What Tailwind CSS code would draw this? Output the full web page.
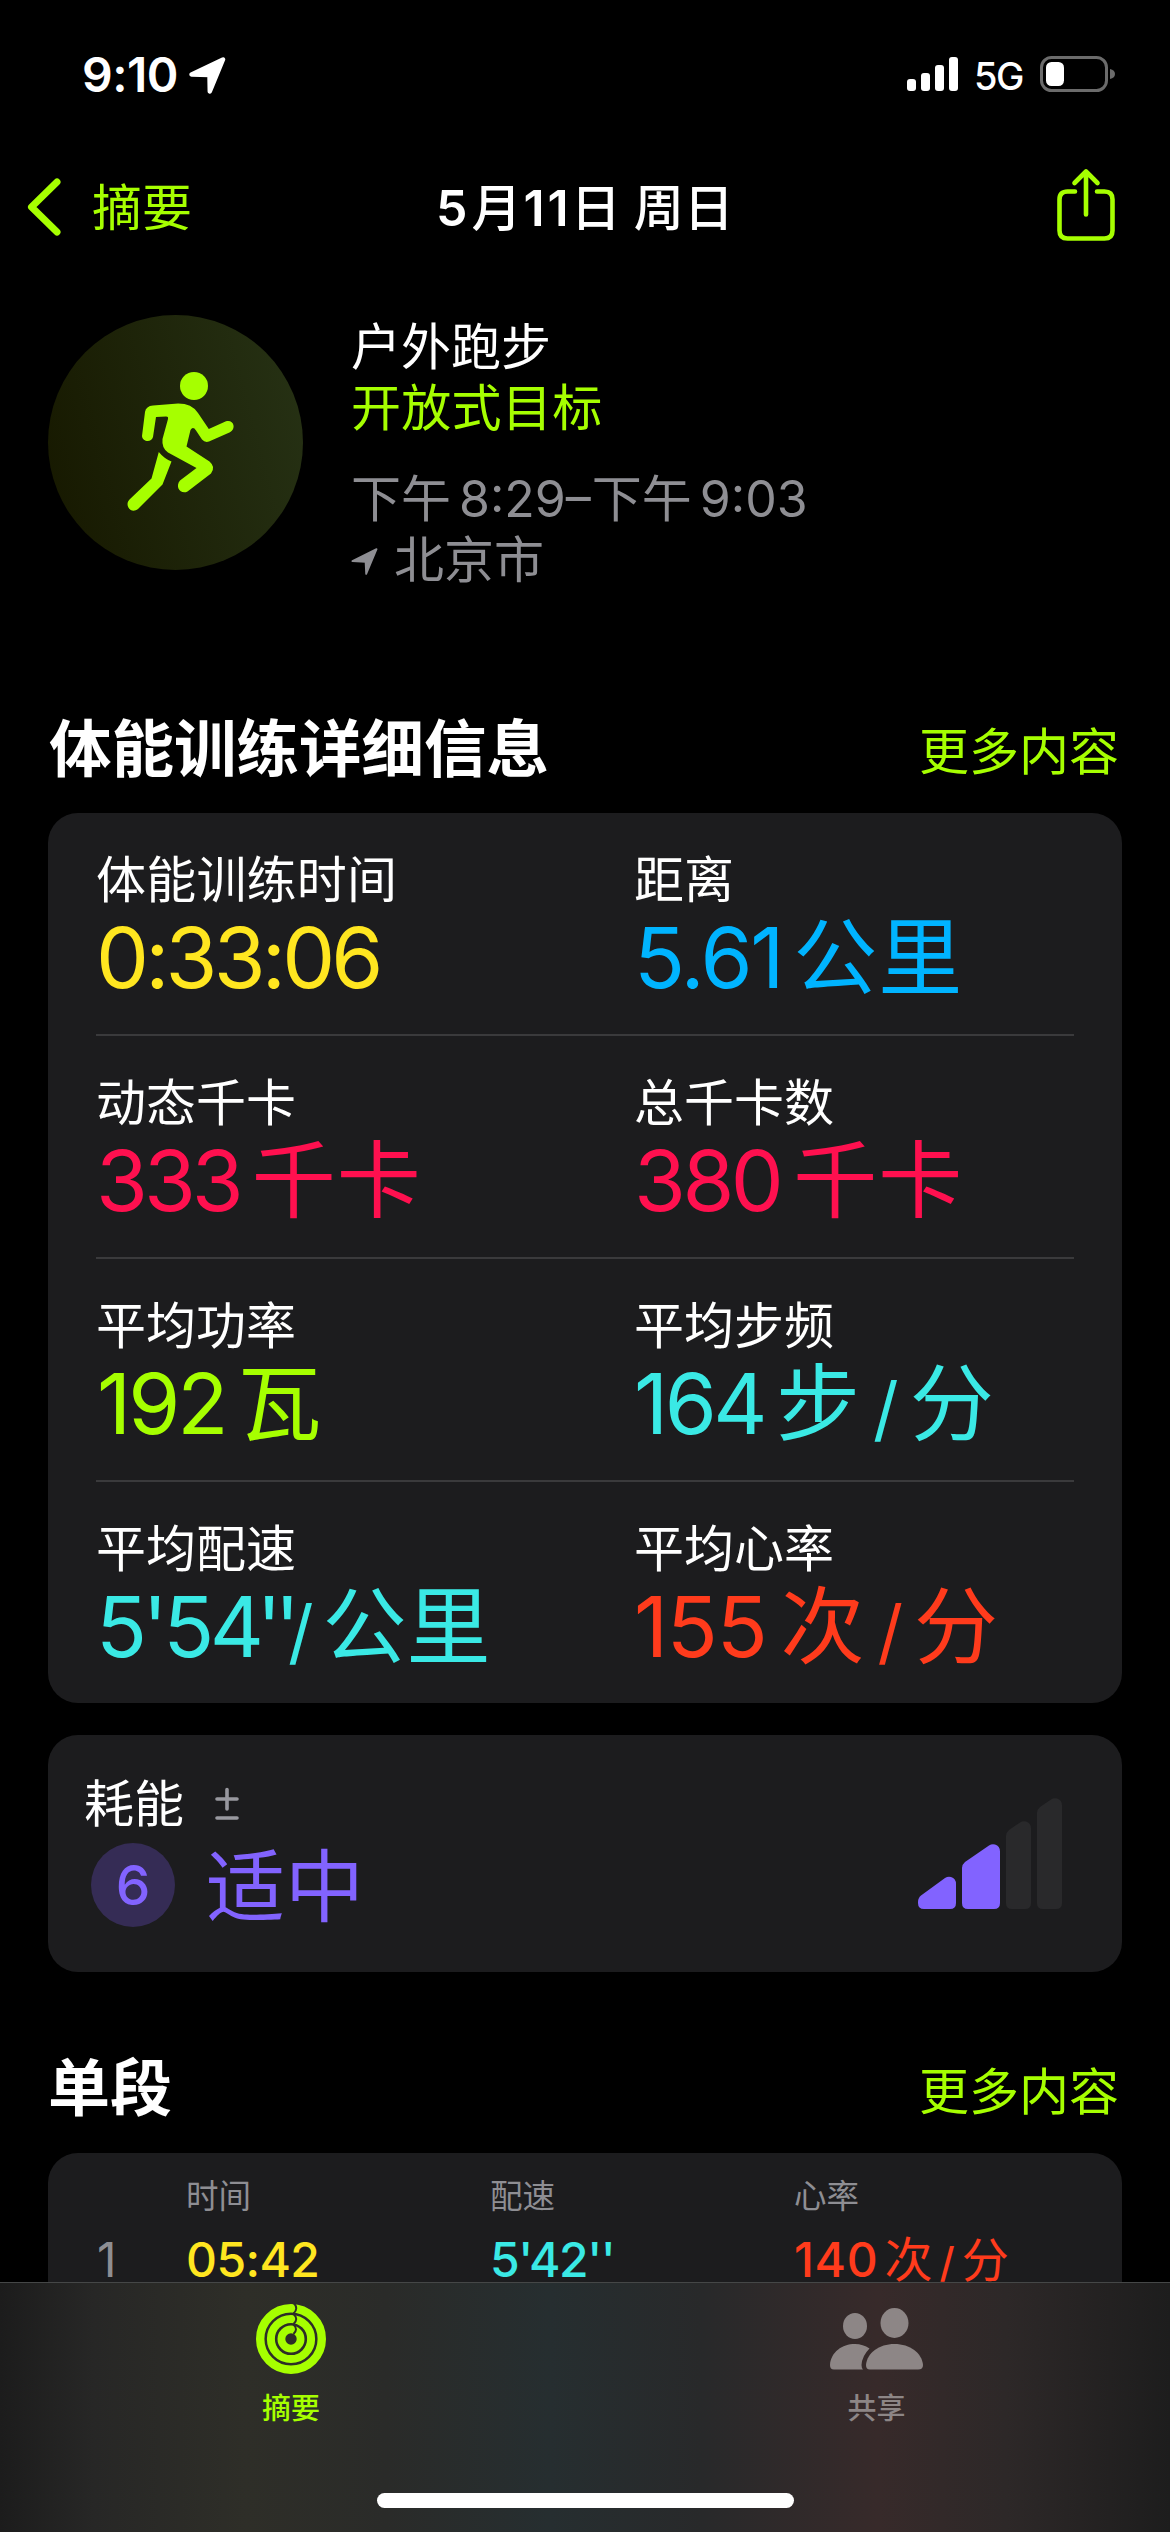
<!DOCTYPE html>
<html lang="zh-CN">
<head>
<meta charset="utf-8">
<title>体能训练</title>
<script src="https://cdn.jsdelivr.net/npm/@tailwindcss/browser@4"></script>
</head>
<body class="bg-black">
<div class="relative flex h-[2532px] w-[1170px] flex-col overflow-hidden bg-black font-['Inter','Noto_Sans_CJK_SC',sans-serif] whitespace-nowrap text-white">

  <!-- status bar -->
  <header class="flex h-[150px] shrink-0 items-center pr-[55px] pl-[82px]">
    <span class="text-[48px] leading-[60px] font-semibold tracking-[-0.500px]">9:10</span>
    <svg class="ml-[11px] h-[37px] w-[37px]" viewBox="0 0 37 37" fill="#fff" stroke="#fff" stroke-width="4.500" stroke-linejoin="round"><path d="M2.500 17.500 L34 2.500 L20.800 34.500 L20.500 18Z"/></svg>
    <div class="mb-[2px] ml-auto flex items-center">
      <div class="flex h-[34px] items-end gap-[5px]">
        <i class="h-[12px] w-[9px] rounded-[3px] bg-white"></i><i class="h-[18px] w-[9px] rounded-[3px] bg-white"></i><i class="h-[26px] w-[9px] rounded-[3px] bg-white"></i><i class="h-[34px] w-[9px] rounded-[3px] bg-white"></i>
      </div>
      <span class="ml-[16px] w-[49px] pt-[3px] text-[38px] leading-[50px] font-medium tracking-[-1.500px]">5G</span>
      <svg class="ml-[17px] h-[36px] w-[75px]" viewBox="0 0 75 36"><rect x="1.500" y="1.500" width="65" height="33" rx="10" fill="none" stroke="#6b6b6b" stroke-width="3"/><path d="M70 13v10q5-1 5-5t-5-5Z" fill="#6b6b6b"/><rect x="6" y="6" width="18" height="24" rx="5.500" fill="#fff"/></svg>
    </div>
  </header>

  <!-- navigation bar -->
  <nav class="grid h-[115px] shrink-0 grid-cols-[410px_1fr_auto] items-center pr-[54px] pl-[26px] text-[50px] leading-[60px]">
    <div class="flex items-center text-[#a6ff00]">
      <svg class="h-[60px] w-[38px]" viewBox="0 0 38 60" fill="none" stroke="#a6ff00" stroke-width="7" stroke-linecap="round" stroke-linejoin="round"><path d="M31 4 5.500 29 31 54"/></svg>
      <span class="ml-[28px]">摘要</span>
    </div>
    <div class="flex items-baseline font-semibold">
      <span>5</span><span class="ml-[4px] font-medium">月</span><span class="ml-[2px] tracking-[3px]">11</span><span class="ml-[-1px] font-medium">日</span><span class="ml-[13px] font-medium">周日</span>
    </div>
    <svg class="mb-[5px] h-[74px] w-[60px]" viewBox="0 0 60 74" fill="none" stroke="#a6ff00" stroke-width="4.600" stroke-linecap="round" stroke-linejoin="round"><path d="M19 23.500H11.500Q3.500 23.500 3.500 31.500V62.500Q3.500 70.500 11.500 70.500H48.500Q56.500 70.500 56.500 62.500V31.500Q56.500 23.500 48.500 23.500H41M30 46.500V3.500M18.500 15 30 3.500 41.500 15"/></svg>
  </nav>

  <!-- workout summary -->
  <section class="flex h-[405px] shrink-0 gap-[48px] pt-[50px] pl-[48px]">
    <div class="flex size-[255px] items-center justify-center rounded-full bg-linear-[75deg,#171900_5%,#263114_95%]">
      <svg class="size-[255px]" viewBox="48 315 255 255" fill="#a6ff00">
        <circle cx="194" cy="386" r="14"/>
        <path d="M153 405.500 L175 403.700 Q191 402.500 198 413 L208.800 429 L226 421.300 C233 419 237 428 230 432.300 L209 441.500 Q205 443 202 439.500 L196 430.500 Q193 426 190.500 430 L186.500 446.500 L209.500 461.500 Q216 467 211 473.500 L187.500 491.500 C181 495 174.500 487 180 480.500 L196.500 468 L168 452.500 Q161.500 448 162.500 439 L168 419 Q168.500 416.500 166 416.600 L156 417 L153 437 C151.500 443 142.500 442 142 436 L145 412 Q146 406 153 405.500Z"/>
        <path d="M158.800 452 Q164 458.500 171.500 461.500 L162.500 484.500 L138 509 C131 514.500 124 505.500 129.500 499.500 L151.500 478.500Z"/>
      </svg>
    </div>
    <div class="flex flex-col pt-[2px] text-[50px] leading-[61px]">
      <span>户外跑步</span>
      <span class="tracking-[0.300px] text-[#a6ff00]">开放式目标</span>
      <div class="mt-[30px] flex items-baseline text-[#8e8e93]"><span>下午</span><span class="ml-[8px]">8:29–</span><span class="ml-[1px]">下午</span><span class="ml-[8px]">9:03</span></div>
      <div class="flex items-center text-[#8e8e93]">
        <svg class="mt-[2px] h-[27px] w-[27px]" viewBox="0 0 37 37" fill="#8e8e93" stroke="#8e8e93" stroke-width="2.500" stroke-linejoin="round"><path d="M2 18 L35 1.500 L20.800 35.500 L20 18.800Z"/></svg>
        <span class="ml-[16px]">北京市</span>
      </div>
    </div>
  </section>

  <!-- workout details -->
  <section class="shrink-0 px-[48px]">
    <div class="flex h-[143px] items-start justify-between pt-[38px] pr-[3px] pl-[1px]">
      <h2 class="pt-[1px] text-[62.500px] leading-[80px] font-bold">体能训练详细信息</h2>
      <span class="pt-[14px] text-[50px] leading-[60px] text-[#a6ff00]">更多内容</span>
    </div>
    <div class="h-[890px] rounded-[30px] bg-[#1c1c1e] px-[48px]">
      <div class="grid h-[223px] grid-cols-[538px_1fr] border-b-2 border-[#3a3a3c] pt-[37px]">
        <div><p class="text-[50px] leading-[60px] tracking-[0.200px]">体能训练时间</p><div class="flex items-baseline text-[84px] leading-[96px] text-[#ffe620]"><span class="tracking-[-3.800px]">0:33:06</span></div></div>
        <div><p class="text-[50px] leading-[60px]">距离</p><div class="flex items-baseline text-[84px] leading-[96px] text-[#00b4ff]"><span class="tracking-[-2.200px]">5.61</span><span class="ml-[11px] tracking-[1px]">公里</span></div></div>
      </div>
      <div class="grid h-[223px] grid-cols-[538px_1fr] border-b-2 border-[#3a3a3c] pt-[37px]">
        <div><p class="text-[50px] leading-[60px]">动态千卡</p><div class="flex items-baseline text-[84px] leading-[96px] text-[#ff104f]"><span class="tracking-[-4px]">333</span><span class="ml-[12px] tracking-[1px]">千卡</span></div></div>
        <div><p class="text-[50px] leading-[60px]">总千卡数</p><div class="flex items-baseline text-[84px] leading-[96px] text-[#ff104f]"><span class="tracking-[-3.500px]">380</span><span class="ml-[13px] tracking-[1px]">千卡</span></div></div>
      </div>
      <div class="grid h-[223px] grid-cols-[538px_1fr] border-b-2 border-[#3a3a3c] pt-[37px]">
        <div><p class="text-[50px] leading-[60px]">平均功率</p><div class="flex items-baseline text-[84px] leading-[96px] text-[#a6ff00]"><span class="ml-[1px] tracking-[-3px]">192</span><span class="ml-[12px]">瓦</span></div></div>
        <div><p class="text-[50px] leading-[60px]">平均步频</p><div class="flex items-baseline text-[84px] leading-[96px] text-[#3ae9e5]"><span class="tracking-[-3.500px]">164</span><span class="ml-[12px]">步</span><span class="ml-[13px] text-[71px]">/</span><span class="ml-[11px]">分</span></div></div>
      </div>
      <div class="grid h-[221px] grid-cols-[538px_1fr] pt-[37px]">
        <div><p class="text-[50px] leading-[60px]">平均配速</p><div class="flex items-baseline text-[84px] leading-[96px] text-[#3ae9e5]"><span class="tracking-[-4.500px]">5'54</span><span class="ml-[-3px] tracking-[-7px]">''</span><span class="ml-[-5px] text-[71px]">/</span><span class="ml-[9px]">公里</span></div></div>
        <div><p class="text-[50px] leading-[60px]">平均心率</p><div class="flex items-baseline text-[84px] leading-[96px] text-[#ff3b1c]"><span class="tracking-[-1.300px]">155</span><span class="ml-[14px]">次</span><span class="ml-[13px] text-[71px]">/</span><span class="ml-[11px]">分</span></div></div>
      </div>
    </div>
  </section>

  <!-- effort -->
  <section class="mx-[48px] mt-[32px] flex h-[237px] shrink-0 justify-between rounded-[30px] bg-[#1c1c1e] pt-[39px] pr-[59px] pl-[36px]">
    <div>
      <div class="flex items-center text-[50px] leading-[60px]"><span>耗能</span>
        <svg class="ml-[30px] h-[34px] w-[26px]" viewBox="0 0 26 34" fill="none" stroke="#98989f" stroke-width="3.600" stroke-linecap="round"><path d="M3 12H23M13 2.500V22M3 31H23"/></svg>
      </div>
      <div class="mt-[9px] flex items-center pl-[7px] text-[#8263ff]">
        <span class="flex size-[84px] items-center justify-center rounded-full bg-[#352c55] text-[55px] leading-[84px] font-medium">6</span>
        <span class="ml-[31px] pt-[5px] text-[79px] leading-[79px]">适中</span>
      </div>
    </div>
    <svg class="mt-[23px] h-[114px] w-[146px]" viewBox="917 1797 146 114">
      <path fill="#8263ff" d="M918 1903v-1q0-4 3-6.500l24-17.500q3-2 6-1 5 1.500 5 7v19q0 6-6 6h-26q-6 0-6-6Z"/>
      <path fill="#8263ff" d="M962 1903v-35q0-3.500 3-6l24-16.500q3-2 6-1 5 1.500 5 7v51.500q0 6-6 6h-26q-6 0-6-6Z"/>
      <path fill="#29292b" d="M1006 1903v-67q0-3.500 3-6l11-7.500q3-2 6-1 5 1.500 5 7v74.500q0 6-6 6h-13q-6 0-6-6Z"/>
      <path fill="#29292b" d="M1037 1903v-90q0-3.500 3-6l11-7.500q3-2 6-1 5 1.500 5 7v97.500q0 6-6 6h-13q-6 0-6-6Z"/>
    </svg>
  </section>

  <!-- splits -->
  <section class="shrink-0 px-[48px]">
    <div class="flex h-[181px] items-start justify-between pt-[76px] pr-[3px]">
      <h2 class="pt-[1px] text-[62px] leading-[80px] font-bold">单段</h2>
      <span class="pt-[14px] text-[50px] leading-[60px] text-[#a6ff00]">更多内容</span>
    </div>
    <div class="h-[379px] rounded-t-[30px] bg-[#1c1c1e] pt-[23px] pl-[48px]">
      <div class="grid grid-cols-[90px_304px_304px_1fr] text-[32.500px] leading-[42px] text-[#8e8e93]"><span></span><span>时间</span><span>配速</span><span>心率</span></div>
      <div class="mt-[12px] grid grid-cols-[90px_304px_304px_1fr] items-baseline text-[48px] leading-[60px] font-medium">
        <span class="pl-[1px] font-normal text-[#8e8e93]">1</span>
        <span class="tracking-[-0.600px] text-[#ffe620]">05:42</span>
        <span class="tracking-[-1.400px] text-[#3ae9e5]">5'42''</span>
        <div class="flex items-baseline text-[#ff3b1c]"><span class="tracking-[0.700px]">140</span><span class="ml-[6px] text-[48px] font-normal">次</span><span class="ml-[7px] text-[41px]">/</span><span class="ml-[7px] text-[47px] font-normal">分</span></div>
      </div>
    </div>
  </section>

  <!-- tab bar overlays the scrolling content -->
  <footer class="absolute inset-x-0 bottom-0 h-[250px] border-t border-[#454747] bg-linear-[90deg,#1c1c1c_0%,#272726_8%,#2e2e28_21%,#2a2b29_33%,#262e30_47%,#28292a_60%,#372a2a_75%,#2d2828_86%,#1d1d1d_100%]">
    <div class="grid grid-cols-[582px_589px] text-[29px] leading-[36px] font-medium">
      <div class="flex flex-col items-center pt-[21px] text-[#a6ff00]">
        <svg class="size-[70px]" viewBox="0 0 70 70" fill="none" stroke="#a6ff00">
          <circle cx="35" cy="35" r="30.800" stroke-width="8.400"/><circle cx="35" cy="35" r="20.100" stroke-width="8"/><circle cx="35" cy="35" r="9.600" stroke-width="7.800"/>
          <path d="M37.500-1q5.500 5 0 10.500M37.500 10q5.500 5 0 10M37.500 20.500q5 4.500 0 9.500" stroke="#2d2d28" stroke-width="2"/>
        </svg>
        <span class="mt-[17px]">摘要</span>
      </div>
      <div class="flex flex-col items-center pt-[21px] text-[#8d8686]">
        <svg class="h-[70px] w-[94px]" viewBox="830 2304 94 70" fill="#8d8686">
          <ellipse cx="855" cy="2326" rx="12" ry="13"/><ellipse cx="894.500" cy="2323" rx="14" ry="15"/>
          <path d="M870 2369.500Q866 2369.500 866 2365C867 2353 879 2344 894.500 2344S922 2353 923 2365Q923 2369.500 918 2369.500Z"/>
          <path d="M834 2369.500Q830 2369.500 830 2365C831 2352 842 2344 855 2344Q863 2344 869.500 2348.500Q862 2356 861.500 2365Q861.500 2368 863 2369.500Z"/>
        </svg>
        <span class="mt-[17px]">共享</span>
      </div>
    </div>
    <div class="mx-auto mt-[66px] h-[15px] w-[417px] rounded-full bg-white"></div>
  </footer>
</div>
</body>
</html>
